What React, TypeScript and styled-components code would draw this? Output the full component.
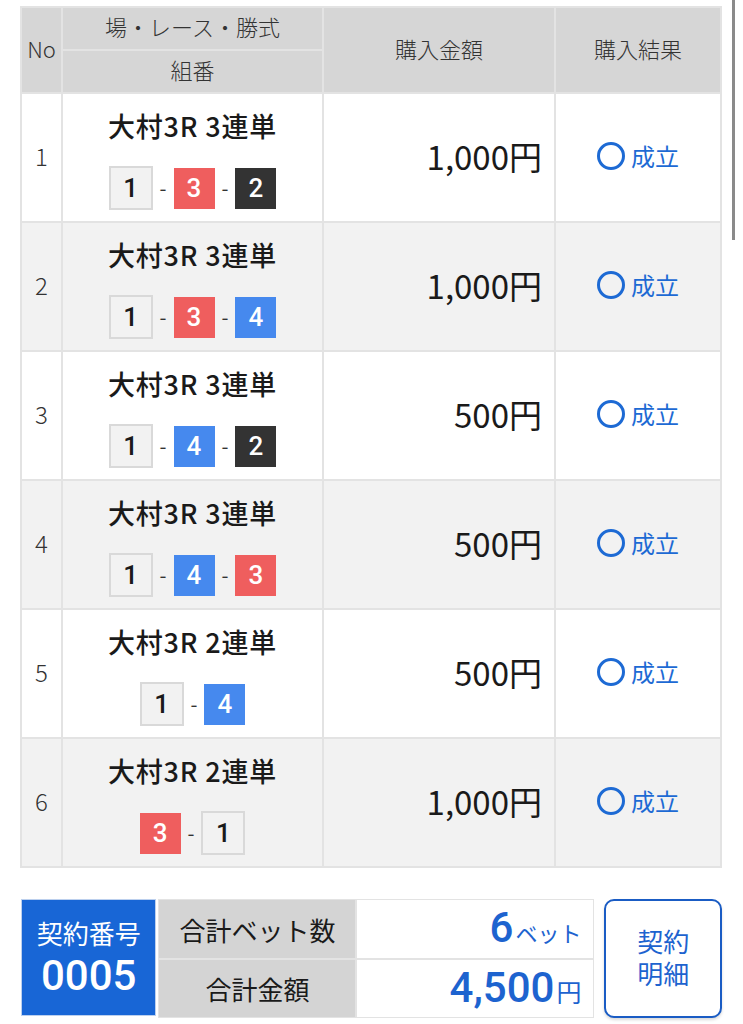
import styled, { createGlobalStyle } from "styled-components";

const GlobalStyle = createGlobalStyle`
  html, body {
    margin: 0;
    padding: 0;
    background: #ffffff;
  }
  body {
    font-family: "Noto Sans CJK JP", "Noto Sans", sans-serif;
    color: #222;
  }
`;

type BoatColor = "white" | "red" | "blue" | "black";

type Bet = {
  no: number;
  race: string;
  combo: BoatColor[];
  nums: number[];
  amount: string;
};

const BETS: Bet[] = [
  { no: 1, race: "大村3R 3連単", nums: [1, 3, 2], combo: ["white", "red", "black"], amount: "1,000円" },
  { no: 2, race: "大村3R 3連単", nums: [1, 3, 4], combo: ["white", "red", "blue"], amount: "1,000円" },
  { no: 3, race: "大村3R 3連単", nums: [1, 4, 2], combo: ["white", "blue", "black"], amount: "500円" },
  { no: 4, race: "大村3R 3連単", nums: [1, 4, 3], combo: ["white", "blue", "red"], amount: "500円" },
  { no: 5, race: "大村3R 2連単", nums: [1, 4], combo: ["white", "blue"], amount: "500円" },
  { no: 6, race: "大村3R 2連単", nums: [3, 1], combo: ["red", "white"], amount: "1,000円" },
];

const BOAT_BG: Record<BoatColor, string> = {
  white: "#f2f2f2",
  red: "#ef5e5e",
  blue: "#4689ee",
  black: "#333333",
};

const Page = styled.div`
  position: relative;
  width: 743px;
  min-height: 1024px;
  padding: 6px 21px 0 20px;
  box-sizing: border-box;
`;

// scroll indicator at the right edge of the screenshot
const ScrollBar = styled.div`
  position: absolute;
  top: 0;
  left: 732px;
  width: 3px;
  height: 240px;
  background: #8a8a8a;
`;

const Table = styled.table`
  width: 702px;
  border-collapse: collapse;
  table-layout: fixed;
  border: 2px solid #e3e3e3;

  & td,
  & th {
    border: 2px solid #e3e3e3;
    padding: 0;
  }
`;

const HeadCell = styled.th`
  background: #d6d6d6;
  color: #333;
  font-weight: 300;
  font-size: 22px;
  height: 41px;
  text-align: center;
  vertical-align: middle;
  line-height: 1;
`;

const HeadText = styled.div`
  margin-top: -5px;
`;

const BodyRow = styled.tr<{ $alt: boolean }>`
  background: ${(p) => (p.$alt ? "#f2f2f2" : "#ffffff")};

  & td {
    height: 127px;
  }
`;

const NoCell = styled.td`
  text-align: center;
  font-size: 24px;
  color: #333;
  font-weight: 300;
`;

const Nudge = styled.div`
  margin-top: -4px;
`;

const RaceCell = styled.td`
  vertical-align: top;
  text-align: center;
`;

const RaceInner = styled.div`
  display: flex;
  flex-direction: column;
  align-items: center;
  padding-top: 16px;
  gap: 24px;
`;

const RaceTitle = styled.div`
  font-size: 27px;
  font-weight: 500;
  line-height: 32px;
  color: #1a1a1a;
  letter-spacing: 0.8px;
`;

const Combo = styled.div`
  display: flex;
  align-items: center;
  height: 44px;
`;

const Boat = styled.span<{ $color: BoatColor }>`
  display: inline-flex;
  align-items: center;
  justify-content: center;
  box-sizing: border-box;
  width: ${(p) => (p.$color === "white" ? 44 : 41)}px;
  height: ${(p) => (p.$color === "white" ? 44 : 41)}px;
  background: ${(p) => BOAT_BG[p.$color]};
  border: ${(p) => (p.$color === "white" ? "2px solid #d9d9d9" : "none")};
  color: ${(p) => (p.$color === "white" ? "#1a1a1a" : "#ffffff")};
  font-size: 26px;
  font-weight: 500;
  font-family: "Roboto", "Noto Sans", sans-serif;
`;

const Dash = styled.span`
  font-size: 20px;
  color: #333;
  margin: 0 7px;
  line-height: 1;
`;

const AmountCell = styled.td`
  text-align: right;
  padding-right: 12px !important;
  font-size: 33px;
  font-weight: 400;
  color: #1a1a1a;
`;

const ResultCell = styled.td`
  text-align: center;
`;

const Result = styled.div`
  display: flex;
  align-items: center;
  justify-content: center;
  gap: 6px;
  color: #1d6ad4;
  font-size: 24px;
  font-weight: 400;
  margin-top: -4px;
`;

const Circle = styled.span`
  display: inline-block;
  width: 28px;
  height: 28px;
  box-sizing: border-box;
  border: 3px solid #1d6ad4;
  border-radius: 50%;
`;

const Summary = styled.div`
  display: flex;
  align-items: stretch;
  margin-top: 31px;
  padding-left: 1px;
`;

const ContractNo = styled.div`
  width: 136px;
  height: 117px;
  box-sizing: border-box;
  background: #1866d6;
  border: 1px solid #bcd0ee;
  color: #fff;
  display: flex;
  flex-direction: column;
  align-items: center;
  justify-content: center;
  gap: 4px;
`;

const ContractLabel = styled.div`
  font-size: 26px;
  line-height: 32px;
`;

const ContractNum = styled.div`
  font-size: 42px;
  line-height: 46px;
  font-weight: 500;
  font-family: "Roboto", "Noto Sans", sans-serif;
`;

const TotalsGrid = styled.div`
  display: grid;
  grid-template-columns: 196px 236px;
  grid-template-rows: 58px 57px;
  gap: 2px;
  margin-left: 2px;
  background: #e3e3e3;
  border: 1px solid #e3e3e3;
`;

const Label = styled.div`
  background: #d4d4d4;
  font-size: 26px;
  color: #1a1a1a;
  display: flex;
  align-items: center;
  justify-content: center;
`;

const Value = styled.div`
  background: #fff;
  display: flex;
  align-items: baseline;
  justify-content: flex-end;
  padding: 0 12px 0 0;
  color: #1d63cf;
  line-height: 56px;
`;

const Big = styled.span`
  font-size: 42px;
  font-weight: 500;
  font-family: "Roboto", "Noto Sans", sans-serif;
`;

const Unit = styled.span<{ $size: number }>`
  font-size: ${(p) => p.$size}px;
  margin-left: 2px;
`;

const DetailButton = styled.button`
  margin-left: 10px;
  width: 118px;
  height: 119px;
  box-sizing: border-box;
  background: #fff;
  border: 2px solid #1a5cc4;
  border-radius: 10px;
  color: #1d63cf;
  font-family: "Noto Sans CJK JP", "Noto Sans", sans-serif;
  font-size: 26px;
  line-height: 32px;
  box-shadow: 0 2px 3px rgba(0, 0, 0, 0.15);
  padding: 0 0 4px;
`;

export default function App() {
  return (
    <>
      <GlobalStyle />
      <Page>
        <ScrollBar />
        <Table>
          <colgroup>
            <col style={{ width: 41 }} />
            <col style={{ width: 261 }} />
            <col style={{ width: 232 }} />
            <col style={{ width: 166 }} />
          </colgroup>
          <thead>
            <tr>
              <HeadCell rowSpan={2}>
                <HeadText>No</HeadText>
              </HeadCell>
              <HeadCell>
                <HeadText>場・レース・勝式</HeadText>
              </HeadCell>
              <HeadCell rowSpan={2}>
                <HeadText>購入金額</HeadText>
              </HeadCell>
              <HeadCell rowSpan={2}>
                <HeadText>購入結果</HeadText>
              </HeadCell>
            </tr>
            <tr>
              <HeadCell>
                <HeadText>組番</HeadText>
              </HeadCell>
            </tr>
          </thead>
          <tbody>
            {BETS.map((bet, i) => (
              <BodyRow key={bet.no} $alt={i % 2 === 1}>
                <NoCell>
                  <Nudge>{bet.no}</Nudge>
                </NoCell>
                <RaceCell>
                  <RaceInner>
                    <RaceTitle>{bet.race}</RaceTitle>
                    <Combo>
                      {bet.nums.map((n, j) => (
                        <span key={j} style={{ display: "contents" }}>
                          {j > 0 && <Dash>-</Dash>}
                          <Boat $color={bet.combo[j]}>{n}</Boat>
                        </span>
                      ))}
                    </Combo>
                  </RaceInner>
                </RaceCell>
                <AmountCell>
                  <Nudge>{bet.amount}</Nudge>
                </AmountCell>
                <ResultCell>
                  <Result>
                    <Circle />
                    成立
                  </Result>
                </ResultCell>
              </BodyRow>
            ))}
          </tbody>
        </Table>

        <Summary>
          <ContractNo>
            <ContractLabel>契約番号</ContractLabel>
            <ContractNum>0005</ContractNum>
          </ContractNo>
          <TotalsGrid>
            <Label>合計ベット数</Label>
            <Value>
              <Big>6</Big>
              <Unit $size={22}>ベット</Unit>
            </Value>
            <Label>合計金額</Label>
            <Value>
              <Big>4,500</Big>
              <Unit $size={25}>円</Unit>
            </Value>
          </TotalsGrid>
          <DetailButton>
            契約
            <br />
            明細
          </DetailButton>
        </Summary>
      </Page>
    </>
  );
}
